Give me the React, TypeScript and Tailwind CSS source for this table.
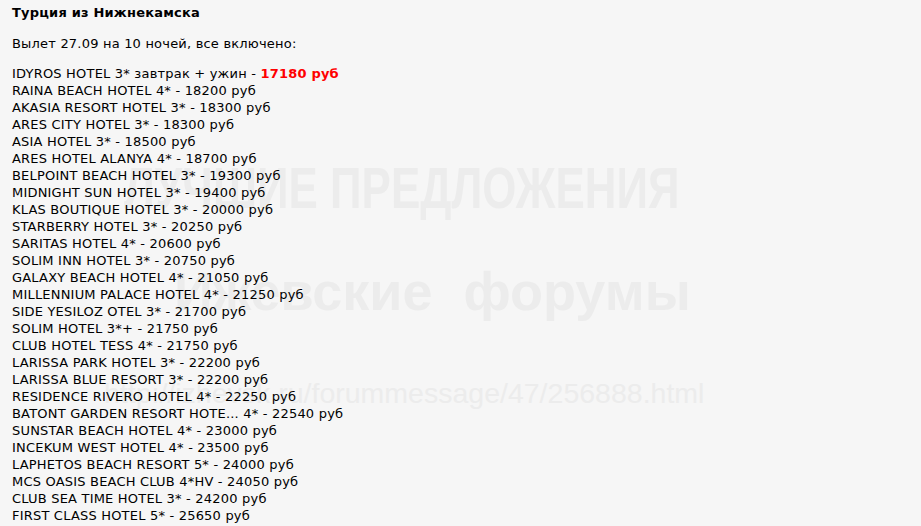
const hotels: [string, string][] = [
  ['RAINA BEACH HOTEL 4*', '18200'],
  ['AKASIA RESORT HOTEL 3*', '18300'],
  ['ARES CITY HOTEL 3*', '18300'],
  ['ASIA HOTEL 3*', '18500'],
  ['ARES HOTEL ALANYA 4*', '18700'],
  ['BELPOINT BEACH HOTEL 3*', '19300'],
  ['MIDNIGHT SUN HOTEL 3*', '19400'],
  ['KLAS BOUTIQUE HOTEL 3*', '20000'],
  ['STARBERRY HOTEL 3*', '20250'],
  ['SARITAS HOTEL 4*', '20600'],
  ['SOLIM INN HOTEL 3*', '20750'],
  ['GALAXY BEACH HOTEL 4*', '21050'],
  ['MILLENNIUM PALACE HOTEL 4*', '21250'],
  ['SIDE YESILOZ OTEL 3*', '21700'],
  ['SOLIM HOTEL 3*+', '21750'],
  ['CLUB HOTEL TESS 4*', '21750'],
  ['LARISSA PARK HOTEL 3*', '22200'],
  ['LARISSA BLUE RESORT 3*', '22200'],
  ['RESIDENCE RIVERO HOTEL 4*', '22250'],
  ['BATONT GARDEN RESORT HOTE... 4*', '22540'],
  ['SUNSTAR BEACH HOTEL 4*', '23000'],
  ['INCEKUM WEST HOTEL 4*', '23500'],
  ['LAPHETOS BEACH RESORT 5*', '24000'],
  ['MCS OASIS BEACH CLUB 4*HV', '24050'],
  ['CLUB SEA TIME HOTEL 3*', '24200'],
  ['FIRST CLASS HOTEL 5*', '25650'],
];

export default function App() {
  return (
    <div className="relative w-[921px] h-[526px] overflow-hidden bg-[#f6f6f6] font-['DejaVu_Sans',sans-serif] text-[13px] leading-[17px] tracking-[0.2px] text-black">
      {/* watermark behind the post */}
      <div className="absolute left-[124px] top-[160px] origin-left scale-x-[0.77] text-[#ececec] font-['Liberation_Sans',sans-serif] font-bold text-[57px] leading-[57px] tracking-normal whitespace-nowrap">
        ЛУЧШИЕ ПРЕДЛОЖЕНИЯ
      </div>
      <div className="absolute left-[174px] top-[264px] text-[#ececec] font-['Liberation_Sans',sans-serif] font-bold text-[54px] leading-[54px] tracking-normal whitespace-nowrap">
        Ижевские<span className="ml-[31px]">форумы</span>
      </div>
      <div className="absolute left-[104px] top-[377px] text-[#ececec] font-['Liberation_Sans',sans-serif] text-[28.5px] leading-[32px] tracking-normal whitespace-nowrap">
        http://izhevsk.ru/forummessage/47/256888.html
      </div>

      <div className="relative flex flex-col pl-[12px] pt-[4px]">
        <div className="font-bold">Турция из Нижнекамска</div>
        <div className="mt-[14px]">Вылет 27.09 на 10 ночей, все включено:</div>
        <div className="mt-[13px] flex flex-col">
          <div>
            IDYROS HOTEL 3* завтрак + ужин -{' '}
            <span className="font-bold text-[#ff0000]">17180 руб</span>
          </div>
          {hotels.map(([name, price]) => (
            <div key={name + price}>
              {name} - {price} руб
            </div>
          ))}
        </div>
      </div>
    </div>
  );
}
